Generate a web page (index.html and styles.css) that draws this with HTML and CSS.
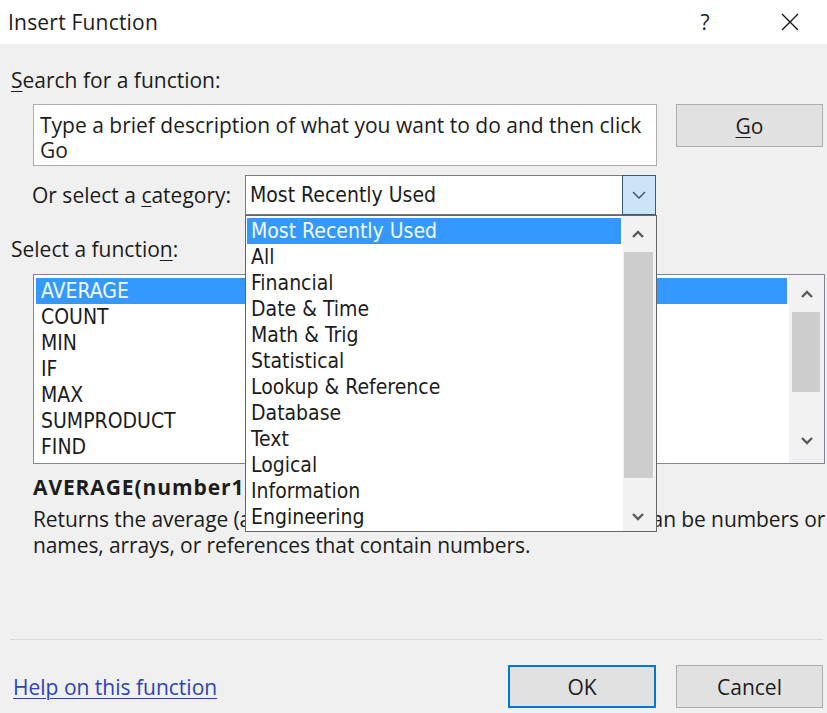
FILE: index.html
```html
<!DOCTYPE html>
<html lang="en">
<head>
<meta charset="utf-8">
<title>Insert Function</title>
<link rel="stylesheet" href="styles.css">
</head>
<body>
<div class="dialog">
  <header class="titlebar">
    <span class="title">Insert Function</span>
    <div class="title-actions">
      <span class="help-q">?</span>
      <svg class="close-x" width="18" height="18" viewBox="0 0 18 18" aria-label="Close">
        <path d="M1 1 L17 17 M17 1 L1 17" stroke="#111" stroke-width="1.3" fill="none"/>
      </svg>
    </div>
  </header>

  <main class="content">
    <div class="lbl search-lbl"><u>S</u>earch for a function:</div>
    <div class="search-row">
      <div class="search-box">Type a brief description of what you want to do and then click<br>Go</div>
      <button class="btn go"><u>G</u>o</button>
    </div>

    <div class="cat-row">
      <span class="lbl">Or select a <u>c</u>ategory:</span>
      <div class="combo">
        <span class="list-font">Most Recently Used</span>
        <span class="combo-btn">
          <svg width="14" height="8" viewBox="0 0 14 8"><polyline points="1,1 7,7 13,1" fill="none" stroke="#3b4a5a" stroke-width="1.3"/></svg>
        </span>
        <div class="popup">
          <ul class="popup-items list-font">
            <li class="sel">Most Recently Used</li>
            <li>All</li>
            <li>Financial</li>
            <li>Date &amp; Time</li>
            <li>Math &amp; Trig</li>
            <li>Statistical</li>
            <li>Lookup &amp; Reference</li>
            <li>Database</li>
            <li>Text</li>
            <li>Logical</li>
            <li>Information</li>
            <li>Engineering</li>
          </ul>
          <div class="vscroll popup-scroll">
            <span class="arrow up">
              <svg width="12" height="8" viewBox="0 0 12 8"><polyline points="1,7 6,2 11,7" fill="none" stroke="#5a5a5a" stroke-width="2.4"/></svg>
            </span>
            <span class="thumb"></span>
            <span class="arrow down">
              <svg width="12" height="8" viewBox="0 0 12 8"><polyline points="1,1 6,6 11,1" fill="none" stroke="#5a5a5a" stroke-width="2.4"/></svg>
            </span>
          </div>
        </div>
      </div>
    </div>

    <div class="lbl fn-label">Select a functio<u>n</u>:</div>
    <div class="fn-list">
      <ul class="fn-items list-font">
        <li class="sel">AVERAGE</li>
        <li>COUNT</li>
        <li>MIN</li>
        <li>IF</li>
        <li>MAX</li>
        <li>SUMPRODUCT</li>
        <li>FIND</li>
      </ul>
      <div class="vscroll fn-scroll">
        <span class="arrow up">
          <svg width="12" height="8" viewBox="0 0 12 8"><polyline points="1,7 6,2 11,7" fill="none" stroke="#5a5a5a" stroke-width="2.4"/></svg>
        </span>
        <span class="thumb"></span>
        <span class="arrow down">
          <svg width="12" height="8" viewBox="0 0 12 8"><polyline points="1,1 6,6 11,1" fill="none" stroke="#5a5a5a" stroke-width="2.4"/></svg>
        </span>
      </div>
    </div>

    <div class="sig">AVERAGE(number1,number2,...)</div>
    <p class="desc">Returns the average (arithmetic mean) of its arguments, which can be numbers or<br>names, arrays, or references that contain numbers.</p>
  </main>

  <footer class="footer">
    <div class="separator"></div>
    <div class="footer-row">
      <a class="help-link" href="#">Help on this function</a>
      <div class="footer-btns">
        <button class="btn ok">OK</button>
        <button class="btn cancel">Cancel</button>
      </div>
    </div>
  </footer>
</div>
</body>
</html>
```

FILE: styles.css
```css
* {
  box-sizing: border-box;
}

html,
body {
  margin: 0;
  padding: 0;
}

body {
  width: 827px;
  height: 713px;
  overflow: hidden;
  background: #f0f0f0;
  font-family: "Open Sans", "Noto Sans", sans-serif;
  font-size: 21px;
  color: #1c1c1c;
}

u {
  text-decoration-thickness: 1px;
  text-underline-offset: 3px;
}

.dialog {
  display: flex;
  flex-direction: column;
  height: 713px;
}

/* title bar */
.titlebar {
  height: 44px;
  flex: none;
  background: #fff;
  display: flex;
  align-items: center;
  padding-left: 8px;
  padding-right: 28px;
}

.title {
  line-height: 26px;
  letter-spacing: 0.2px;
}

.title-actions {
  margin-left: auto;
  display: flex;
  align-items: center;
}

.help-q {
  width: 20px;
  text-align: center;
  line-height: 26px;
  margin-right: 66px;
}

.close-x {
  display: block;
}

/* body */
.content {
  display: flex;
  flex-direction: column;
  padding: 0 2px 0 11px;
}

.lbl {
  line-height: 26px;
}

.search-lbl {
  margin-top: 23px;
}

.search-row {
  display: flex;
  gap: 19px;
  margin-top: 11px;
  padding-left: 22px;
  padding-right: 2px;
}

.search-box {
  width: 624px;
  height: 62px;
  background: #fff;
  border: 1px solid #abadb3;
  padding: 8px 6px 0;
  line-height: 25px;
  white-space: nowrap;
}

.btn {
  font: inherit;
  color: #1c1c1c;
  background: #e1e1e1;
  border: 1px solid #adadad;
  line-height: 26px;
  padding: 0;
}

.go {
  width: 147px;
  height: 43px;
}

/* category combo */
.cat-row {
  display: grid;
  grid-template-columns: 213px 411px;
  align-items: center;
  margin-top: 9px;
  padding-left: 21px;
}

.list-font {
  font-family: "DejaVu Sans Condensed", "DejaVu Sans", sans-serif;
  font-stretch: condensed;
  font-size: 21px;
}

.combo {
  position: relative;
  height: 40px;
  background: #fff;
  border: 1px solid #7a7a7a;
  display: flex;
  align-items: center;
  padding-left: 4px;
}

.combo-btn {
  margin: -1px -1px -1px auto;
  width: 34px;
  height: 40px;
  border: 1px solid #3d5a75;
  background: #cce4f7;
  display: flex;
  align-items: center;
  justify-content: center;
}

.popup {
  position: absolute;
  top: 39px;
  left: -1px;
  width: 412px;
  height: 317px;
  background: #fff;
  border: 1px solid #646464;
  display: flex;
  z-index: 5;
}

.popup-items {
  list-style: none;
  margin: 0;
  flex: 1;
  padding: 2px 2px 0 1px;
}

.popup-items li,
.fn-items li {
  height: 26px;
  line-height: 26px;
  padding-left: 4px;
  white-space: nowrap;
  color: #1c1c1c;
}

.popup-items li.sel,
.fn-items li.sel {
  background: #3399ff;
  color: #f4f9ff;
}

/* scrollbars */
.vscroll {
  display: flex;
  flex-direction: column;
  align-items: center;
  background: #f2f2f2;
}

.vscroll .arrow {
  display: flex;
  align-items: center;
  justify-content: center;
  width: 100%;
}

.vscroll .thumb {
  background: #cdcdcd;
}

.popup-scroll {
  width: 33px;
}

.popup-scroll .arrow.up {
  height: 36px;
  padding-right: 3px;
}

.popup-scroll .thumb {
  width: 29px;
  height: 226px;
  margin-right: 2px;
}

.popup-scroll .arrow.down {
  flex: 1;
  align-items: flex-end;
  padding-bottom: 10px;
  padding-right: 3px;
}

/* function list */
.fn-label {
  margin-top: 21px;
}

.fn-list {
  margin-top: 12px;
  margin-left: 22px;
  width: 792px;
  height: 190px;
  background: #fff;
  border: 1px solid #828790;
  display: flex;
}

.fn-items {
  list-style: none;
  margin: 0;
  flex: 1;
  padding: 3px 2px 0 2px;
}

.fn-items li {
  padding-left: 5px;
}

.fn-scroll {
  width: 35px;
}

.fn-scroll .arrow.up {
  height: 37px;
}

.fn-scroll .thumb {
  width: 28px;
  height: 80px;
  margin-right: 2px;
}

.fn-scroll .arrow.down {
  flex: 1;
  align-items: flex-end;
  padding-bottom: 18px;
}

/* selected function help */
.sig {
  margin-top: 10px;
  padding-left: 22px;
  font-weight: 700;
  line-height: 26px;
  letter-spacing: 0.9px;
}

.desc {
  margin: 6px 0 0;
  padding-left: 22px;
  line-height: 26px;
  white-space: nowrap;
  letter-spacing: -0.1px;
}

/* footer */
.footer {
  margin-top: auto;
  padding: 0 4px 5px 10px;
}

.separator {
  height: 1px;
  background: #dadada;
}

.footer-row {
  display: flex;
  align-items: center;
  margin-top: 25px;
}

.help-link {
  margin-left: 3px;
  color: #2d43b8;
  text-decoration: underline;
  text-decoration-thickness: 1px;
  text-underline-offset: 3px;
}

.footer-btns {
  margin-left: auto;
  display: flex;
  gap: 20px;
}

.ok {
  width: 148px;
  height: 43px;
  border: 2px solid #0078d7;
}

.cancel {
  width: 147px;
  height: 43px;
}
```
